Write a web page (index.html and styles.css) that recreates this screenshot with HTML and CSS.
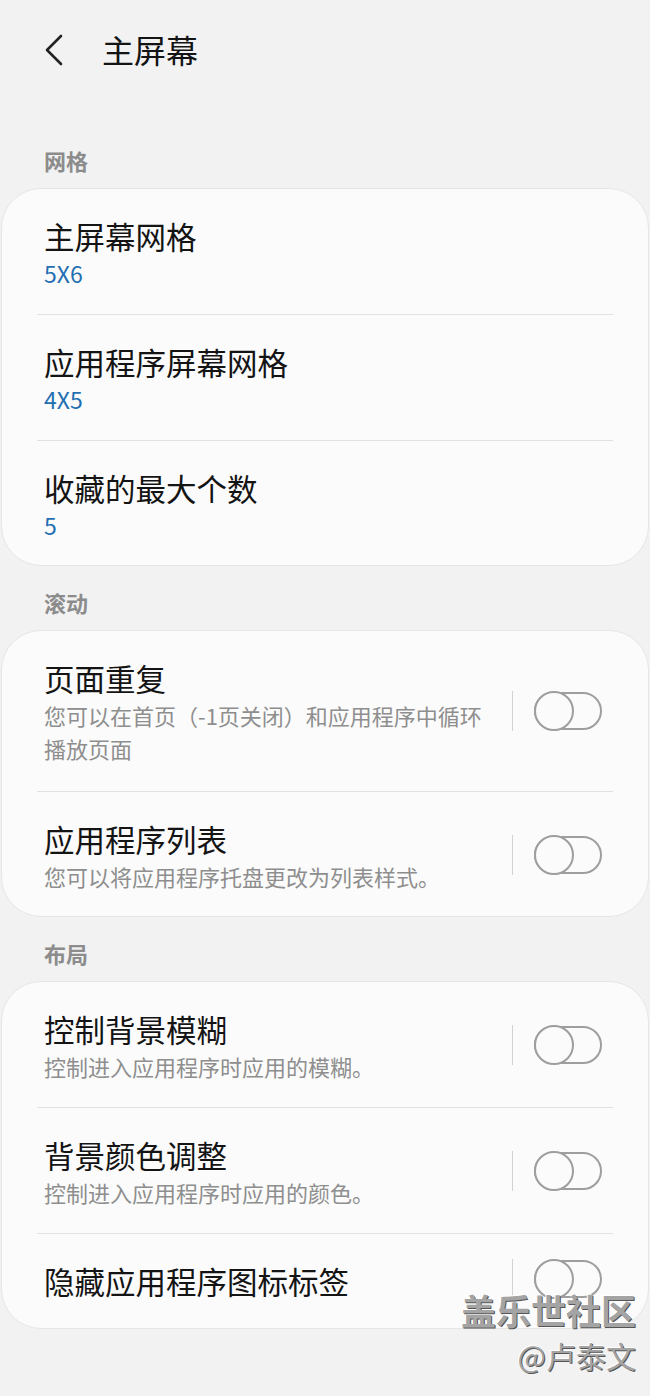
FILE: index.html
```html
<!DOCTYPE html>
<html lang="zh-CN">
<head>
    <meta charset="UTF-8">
    <meta name="viewport" content="width=device-width, initial-scale=1.0">
    <title>主屏幕</title>
    <link rel="stylesheet" href="styles.css">
</head>
<body>
    <div class="header">
        <svg class="back" width="24" height="32" viewBox="0 0 24 32">
            <path d="M17 2 L3 16 L17 30" fill="none" stroke="#222" stroke-width="2.6" stroke-linecap="round" stroke-linejoin="round"/>
        </svg>
        <span class="title">主屏幕</span>
    </div>

    <div class="section first">网格</div>
    <div class="card">
        <div class="row">
            <div class="text">
                <div class="row-title">主屏幕网格</div>
                <div class="value">5X6</div>
            </div>
        </div>
        <div class="row">
            <div class="text">
                <div class="row-title">应用程序屏幕网格</div>
                <div class="value">4X5</div>
            </div>
        </div>
        <div class="row">
            <div class="text">
                <div class="row-title">收藏的最大个数</div>
                <div class="value">5</div>
            </div>
        </div>
    </div>

    <div class="section">滚动</div>
    <div class="card">
        <div class="row tall">
            <div class="text">
                <div class="row-title">页面重复</div>
                <div class="sub">您可以在首页（-1页关闭）和应用程序中循环播放页面</div>
            </div>
            <div class="sep"></div>
            <div class="toggle"><span class="knob"></span></div>
        </div>
        <div class="row">
            <div class="text">
                <div class="row-title">应用程序列表</div>
                <div class="sub">您可以将应用程序托盘更改为列表样式。</div>
            </div>
            <div class="sep"></div>
            <div class="toggle"><span class="knob"></span></div>
        </div>
    </div>

    <div class="section">布局</div>
    <div class="card">
        <div class="row">
            <div class="text">
                <div class="row-title">控制背景模糊</div>
                <div class="sub">控制进入应用程序时应用的模糊。</div>
            </div>
            <div class="sep"></div>
            <div class="toggle"><span class="knob"></span></div>
        </div>
        <div class="row">
            <div class="text">
                <div class="row-title">背景颜色调整</div>
                <div class="sub">控制进入应用程序时应用的颜色。</div>
            </div>
            <div class="sep"></div>
            <div class="toggle"><span class="knob"></span></div>
        </div>
        <div class="row single">
            <div class="text">
                <div class="row-title">隐藏应用程序图标标签</div>
            </div>
            <div class="sep"></div>
            <div class="toggle"><span class="knob"></span></div>
        </div>
    </div>

    <div class="watermark">
        <div class="wm-big">盖乐世社区</div>
        <div class="wm-small">@卢泰文</div>
    </div>
</body>
</html>
```

FILE: styles.css
```css
body { margin: 0; background: #f2f2f2; font-family: "Noto Sans CJK SC", "Noto Sans", sans-serif; color: #141414; position: relative; min-height: 1396px; }
.header { height: 102px; display: flex; align-items: center; padding-left: 44px; }
.back { margin-right: 34px; margin-top: -2px; }
.title { font-size: 32px; line-height: 40px; margin-top: -4px; }
.section { padding: 21px 44px 13px; font-size: 22px; line-height: 30px; font-weight: bold; color: #8c8c8c; }
.section.first { padding-top: 43px; }
.card { margin: 0 1px; background: #fbfbfb; border: 1px solid #e6e6e6; border-radius: 40px; padding: 0 35px; }
.row { display: flex; align-items: center; padding: 29px 11px 25px 7px; border-top: 1px solid #e1e1e1; margin-top: -1px; }
.row:first-child { border-top-color: transparent; }
.row:last-child { padding-bottom: 23px; }
.row.tall { padding-bottom: 27px; }
.row.single { padding-bottom: 29px; }
.text { flex: 1; }
.row-title { font-size: 30.5px; line-height: 36px; }
.value { font-size: 23px; line-height: 33px; margin-top: 3px; color: #1f6fb2; }
.sub { font-size: 22px; line-height: 33px; margin-top: 3px; color: #8e8e8e; padding-right: 18px; }
.sep { width: 1px; height: 40px; background: #d2d2d2; margin-right: 21px; margin-top: -4px; }
.toggle { position: relative; width: 64px; height: 34px; border: 2px solid #9e9e9e; border-radius: 20px; margin-top: -4px; }
.knob { position: absolute; left: -2px; top: -3px; width: 36px; height: 36px; border: 2px solid #9e9e9e; border-radius: 50%; background: #fbfbfb; }
.watermark { position: absolute; right: 14px; top: 1288px; text-align: right; color: #a4a4a4; font-weight: bold; text-shadow: 1px 1px 0 #555, -1px -1px 0 #fff; }
.wm-big { font-size: 35px; line-height: 44px; }
.wm-small { font-size: 30px; line-height: 46px; font-weight: normal; }
```
